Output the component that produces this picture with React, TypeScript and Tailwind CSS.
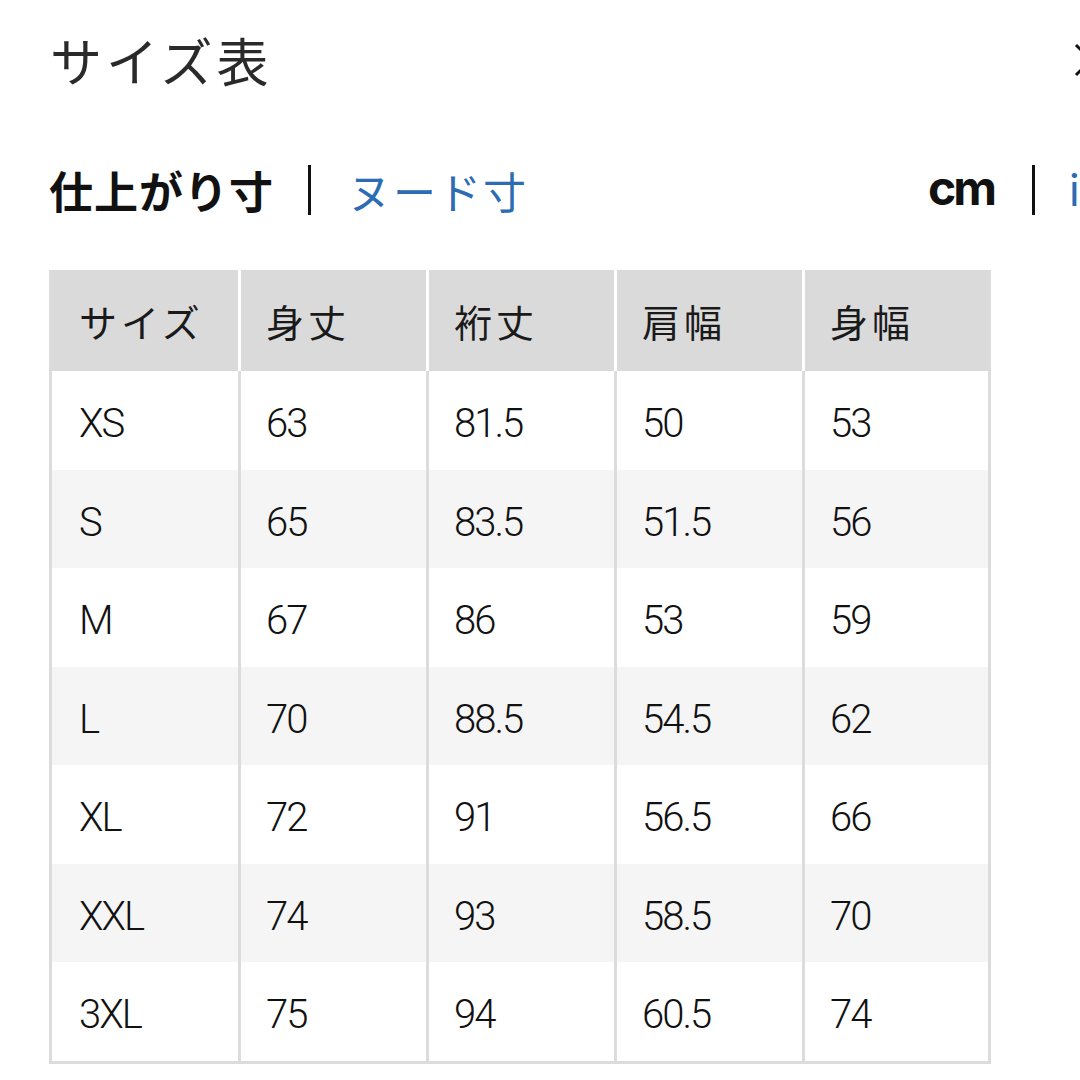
import React from "react";

const jp = { fontFamily: '"Noto Sans CJK JP", "Noto Sans", sans-serif' };

const rows = [
  ["XS", "63", "81.5", "50", "53"],
  ["S", "65", "83.5", "51.5", "56"],
  ["M", "67", "86", "53", "59"],
  ["L", "70", "88.5", "54.5", "62"],
  ["XL", "72", "91", "56.5", "66"],
  ["XXL", "74", "93", "58.5", "70"],
  ["3XL", "75", "94", "60.5", "74"],
];

const headers = ["サイズ", "身丈", "裄丈", "肩幅", "身幅"];

export default function App() {
  return (
    <div className="w-[1080px] h-[1080px] overflow-hidden bg-white text-[#1a1a1a]">
      <div className="w-[1200px]">
        {/* Title row */}
        <div className="w-[1108px] h-[130px] pl-[50px] pb-[10px] flex items-center justify-between">
          <div className="text-[52px] leading-none tracking-[4px] text-[#2a2a2a] font-normal" style={jp}>
            サイズ表
          </div>
          <svg width="34" height="34" viewBox="0 0 34 34" className="shrink-0">
            <path d="M2 2 L32 32 M32 2 L2 32" stroke="#111" strokeWidth="3" fill="none" />
          </svg>
        </div>

        {/* Tabs row */}
        <div className="h-[120px] pl-[49px] flex items-center">
          <div className="w-[879px] shrink-0 flex items-center">
            <span className="text-[44px] leading-none font-bold tracking-[1px] text-[#111]" style={jp}>
              仕上がり寸
            </span>
            <span className="ml-[34px] w-[3px] h-[50px] bg-[#111]" />
            <span className="ml-[37px] text-[43px] leading-none tracking-[2px] text-[#2c6cb2]" style={jp}>
              ヌード寸
            </span>
          </div>
          <div className="flex items-center shrink-0">
            <span
              className="text-[48px] leading-none font-bold tracking-[-3px] text-[#111] -mt-[4px]"
              style={{ fontFamily: 'Inter, "Liberation Sans", sans-serif' }}
            >
              cm
            </span>
            <span className="ml-[38px] w-[3px] h-[50px] bg-[#111]" />
            <span
              className="ml-[34px] text-[44px] leading-none text-[#2c6cb2]"
              style={{ fontFamily: 'Inter, "Liberation Sans", sans-serif' }}
            >
              inch
            </span>
          </div>
        </div>

        {/* Table */}
        <div className="mt-[20px] ml-[49px] w-[942px] border-l-[3px] border-b-[3px] border-[#dcdcdc] bg-white">
          <div className="grid grid-cols-[189px_188px_188px_188px_186px] h-[101px]">
            {headers.map((h, i) => (
              <div
                key={h}
                className={
                  "bg-[#dadada] flex items-center text-[38px] tracking-[4px] text-[#1a1a1a] " +
                  (i === 4 ? "border-r-[3px] border-[#dcdcdc]" : "border-r-[3px] border-white") +
                  (i === 0 ? " pl-[27px]" : " pl-[25px]")
                }
                style={jp}
              >
                {h}
              </div>
            ))}
          </div>
          {rows.map((r, ri) => (
            <div
              key={r[0]}
              className={
                "grid grid-cols-[189px_188px_188px_188px_186px] h-[98.5px] " +
                (ri % 2 === 1 ? "bg-[#f5f5f5]" : "bg-white")
              }
            >
              {r.map((c, ci) => (
                <div
                  key={ci}
                  className={
                    "flex items-center pt-[8px] border-r-[3px] border-[#dcdcdc] text-[40px] font-light tracking-[-2px] text-[#111] " +
                    (ci === 0 ? "pl-[27px]" : "pl-[25px]")
                  }
                  style={{ fontFamily: 'Roboto, "Noto Sans", sans-serif' }}
                >
                  {c}
                </div>
              ))}
            </div>
          ))}
        </div>
      </div>
    </div>
  );
}
